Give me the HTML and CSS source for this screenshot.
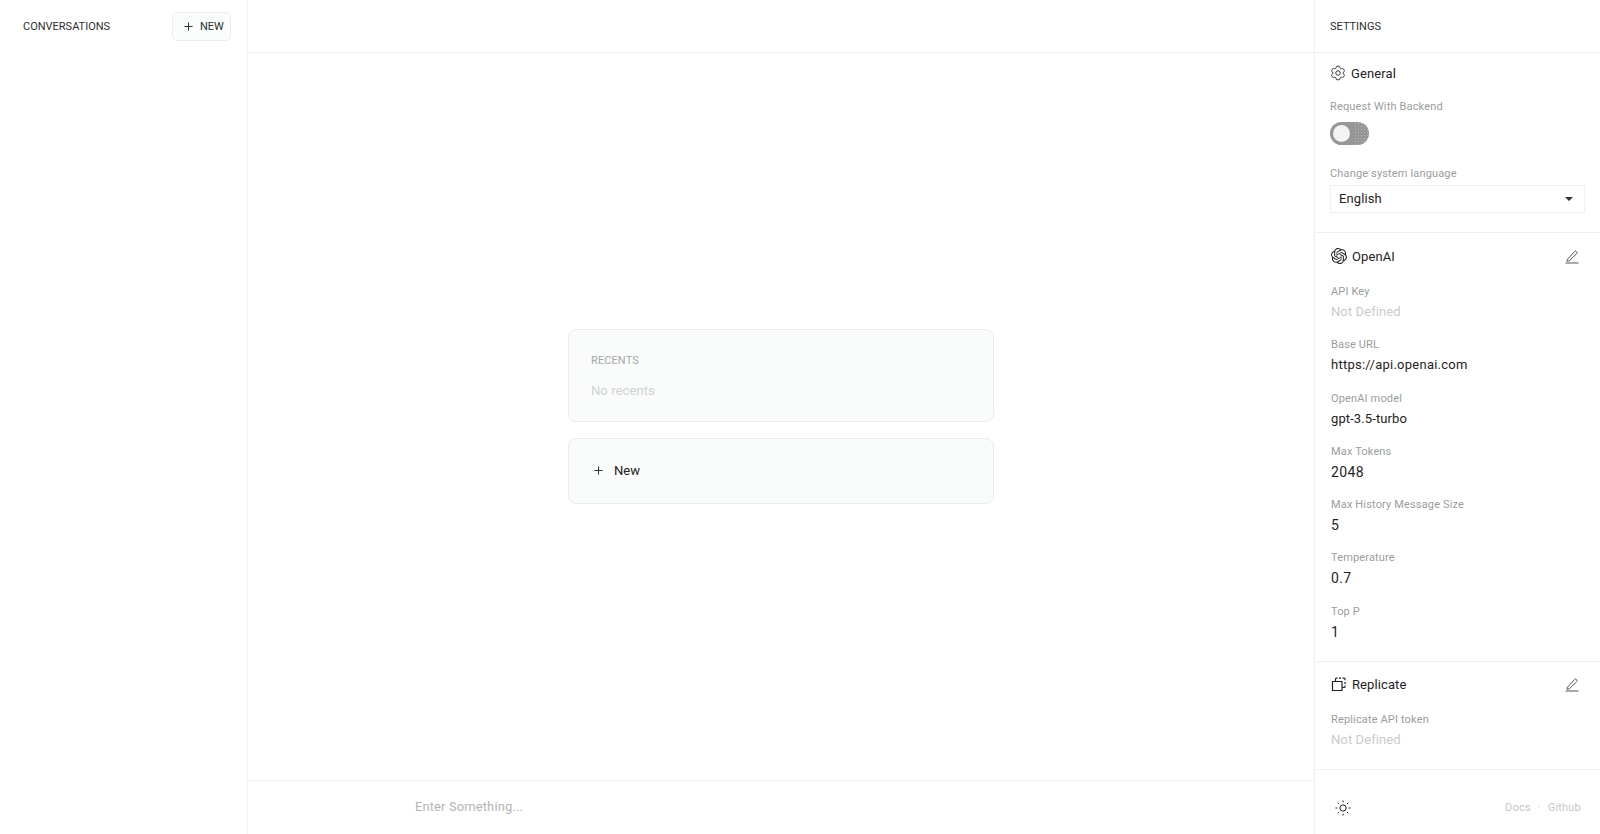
FILE: index.html
```html
<!DOCTYPE html>
<html lang="en">
<head>
    <meta charset="UTF-8">
    <meta name="viewport" content="width=device-width, initial-scale=1.0">
    <title>Chat</title>
    <link rel="stylesheet" href="styles.css">
</head>
<body>
    <div class="app">
        <aside class="sidebar">
            <div class="bar sidebar-bar">
                <span class="bar-title">CONVERSATIONS</span>
                <button class="btn-new">
                    <svg class="icon-plus" viewBox="0 0 24 24"><path d="M12 4.5v15m7.5-7.5h-15"/></svg>
                    NEW
                </button>
            </div>
        </aside>

        <main class="main">
            <div class="bar"></div>
            <div class="welcome">
                <div class="card recents">
                    <div class="card-title">RECENTS</div>
                    <div class="card-empty">No recents</div>
                </div>
                <div class="card new-card">
                    <svg class="icon-plus" viewBox="0 0 24 24"><path d="M12 4.5v15m7.5-7.5h-15"/></svg>
                    New
                </div>
            </div>
            <div class="prompt">Enter Something...</div>
        </main>

        <aside class="settings">
            <div class="bar settings-bar">
                <span class="bar-title">SETTINGS</span>
            </div>

            <section class="group general">
                <div class="group-head">
                    <h3>
                        <svg class="icon icon-gear" viewBox="0 0 24 24"><path d="M9.594 3.94c.09-.542.56-.94 1.11-.94h2.593c.55 0 1.02.398 1.11.94l.213 1.281c.063.374.313.686.645.87.074.04.147.083.22.127.324.196.72.257 1.075.124l1.217-.456a1.125 1.125 0 011.37.49l1.296 2.247a1.125 1.125 0 01-.26 1.431l-1.003.827c-.293.24-.438.613-.431.992a6.759 6.759 0 010 .255c-.007.378.138.75.43.99l1.005.828c.424.35.534.954.26 1.43l-1.298 2.247a1.125 1.125 0 01-1.369.491l-1.217-.456c-.355-.133-.75-.072-1.076.124a6.57 6.57 0 01-.22.128c-.331.183-.581.495-.644.869l-.213 1.28c-.09.543-.56.941-1.11.941h-2.594c-.55 0-1.02-.398-1.11-.94l-.213-1.281c-.062-.374-.312-.686-.644-.87a6.52 6.52 0 01-.22-.127c-.325-.196-.72-.257-1.076-.124l-1.217.456a1.125 1.125 0 01-1.369-.49l-1.297-2.247a1.125 1.125 0 01.26-1.431l1.004-.827c.292-.24.437-.613.43-.992a6.932 6.932 0 010-.255c.007-.378-.138-.75-.43-.99l-1.004-.828a1.125 1.125 0 01-.26-1.43l1.297-2.247a1.125 1.125 0 011.37-.491l1.216.456c.356.133.751.072 1.076-.124.072-.044.146-.087.22-.128.332-.183.582-.495.644-.869l.214-1.281z"/><path d="M15 12a3 3 0 11-6 0 3 3 0 016 0z"/></svg>
                        General
                    </h3>
                </div>
                <div class="label">Request With Backend</div>
                <div class="toggle"><span class="knob"></span></div>
                <div class="label lang-label">Change system language</div>
                <div class="select">
                    English
                    <span class="caret"></span>
                </div>
            </section>

            <section class="group openai">
                <div class="group-head">
                    <h3>
                        <svg class="icon icon-fill" viewBox="0 0 24 24"><path d="M22.2819 9.8211a5.9847 5.9847 0 0 0-.5157-4.9108 6.0462 6.0462 0 0 0-6.5098-2.9A6.0651 6.0651 0 0 0 4.9807 4.1818a5.9847 5.9847 0 0 0-3.9977 2.9 6.0462 6.0462 0 0 0 .7427 7.0966 5.98 5.98 0 0 0 .511 4.9107 6.051 6.051 0 0 0 6.5146 2.9001A5.9847 5.9847 0 0 0 13.2599 24a6.0557 6.0557 0 0 0 5.7718-4.2058 5.9894 5.9894 0 0 0 3.9977-2.9001 6.0557 6.0557 0 0 0-.7475-7.0729zm-9.022 12.6081a4.4755 4.4755 0 0 1-2.8764-1.0408l.1419-.0804 4.7783-2.7582a.7948.7948 0 0 0 .3927-.6813v-6.7369l2.02 1.1686a.071.071 0 0 1 .038.052v5.5826a4.504 4.504 0 0 1-4.4945 4.4944zm-9.6607-4.1254a4.4708 4.4708 0 0 1-.5346-3.0137l.142.0852 4.783 2.7582a.7712.7712 0 0 0 .7806 0l5.8428-3.3685v2.3324a.0804.0804 0 0 1-.0332.0615L9.74 19.9502a4.4992 4.4992 0 0 1-6.1408-1.6464zM2.3408 7.8956a4.485 4.485 0 0 1 2.3655-1.9728V11.6a.7664.7664 0 0 0 .3879.6765l5.8144 3.3543-2.0201 1.1685a.0757.0757 0 0 1-.071 0l-4.8303-2.7865A4.504 4.504 0 0 1 2.3408 7.872zm16.5963 3.8558L13.1038 8.364 15.1192 7.2a.0757.0757 0 0 1 .071 0l4.8303 2.7913a4.4944 4.4944 0 0 1-.6765 8.1042v-5.6772a.79.79 0 0 0-.407-.667zm2.0107-3.0231l-.142-.0852-4.7735-2.7818a.7759.7759 0 0 0-.7854 0L9.409 9.2297V6.8974a.0662.0662 0 0 1 .0284-.0615l4.8303-2.7866a4.4992 4.4992 0 0 1 6.6802 4.66zM8.3065 12.863l-2.02-1.1638a.0804.0804 0 0 1-.038-.0567V6.0742a4.4992 4.4992 0 0 1 7.3757-3.4537l-.142.0805L8.704 5.459a.7948.7948 0 0 0-.3927.6813zm1.0976-2.3654l2.602-1.4998 2.6069 1.4998v2.9994l-2.5974 1.4997-2.6067-1.4997Z"/></svg>
                        OpenAI
                    </h3>
                    <svg class="icon-edit" viewBox="0 0 16 16"><path d="M3.5 11.2 10.7 3.4a1.1 1.1 0 0 1 1.6 0l.5.5a1.1 1.1 0 0 1 0 1.6L5.5 12.7l-2.6.5z"/><path d="M1.5 15h13"/></svg>
                </div>
                <div class="field"><div class="label">API Key</div><div class="value empty">Not Defined</div></div>
                <div class="field"><div class="label">Base URL</div><div class="value url">https://api.openai.com</div></div>
                <div class="field"><div class="label">OpenAI model</div><div class="value">gpt-3.5-turbo</div></div>
                <div class="field"><div class="label">Max Tokens</div><div class="value num">2048</div></div>
                <div class="field"><div class="label">Max History Message Size</div><div class="value num">5</div></div>
                <div class="field"><div class="label">Temperature</div><div class="value num">0.7</div></div>
                <div class="field"><div class="label">Top P</div><div class="value num">1</div></div>
            </section>

            <section class="group replicate">
                <div class="group-head">
                    <h3>
                        <svg class="icon" viewBox="0 0 16 16"><path d="M1.5 5.5h9.5v9H1.5z"/><path d="M4.5 5.5V3.2c0-.6.4-1 1-1h1M8 2.2h2M11.5 2.2h1.5c.6 0 1 .4 1 1v1M14 6v2M14 9.5v1.2c0 .5-.3.8-.8.8H11"/></svg>
                        Replicate
                    </h3>
                    <svg class="icon-edit" viewBox="0 0 16 16"><path d="M3.5 11.2 10.7 3.4a1.1 1.1 0 0 1 1.6 0l.5.5a1.1 1.1 0 0 1 0 1.6L5.5 12.7l-2.6.5z"/><path d="M1.5 15h13"/></svg>
                </div>
                <div class="field"><div class="label">Replicate API token</div><div class="value empty">Not Defined</div></div>
            </section>

            <div class="settings-foot">
                <svg class="icon icon-sun" viewBox="0 0 24 24"><path d="M12 3v2.25m6.364.386l-1.591 1.591M21 12h-2.25m-.386 6.364l-1.591-1.591M12 18.75V21m-4.773-4.227l-1.591 1.591M5.25 12H3m4.227-4.773L5.636 5.636M15.75 12a3.75 3.75 0 11-7.5 0 3.75 3.75 0 017.5 0z"/></svg>
                <div class="foot-links">Docs <span class="dot">·</span> Github</div>
            </div>
        </aside>
    </div>
</body>
</html>
```

FILE: styles.css
```css
* {
    box-sizing: border-box;
}
body {
    margin: 0;
    font-family: Roboto, "Liberation Sans", sans-serif;
    font-size: 13px;
    letter-spacing: 0.1px;
    color: #1f2323;
    background: white;
    overflow: hidden;
}
.app {
    display: flex;
    height: 100vh;
}
.bar {
    display: flex;
    align-items: center;
    justify-content: space-between;
    height: 53px;
    flex-shrink: 0;
    border-bottom: 1px solid #eef0f0;
}
.bar-title {
    font-size: 11px;
    letter-spacing: 0;
    color: #2c3030;
}

/* left column */
.sidebar {
    width: 248px;
    flex-shrink: 0;
    border-right: 1px solid #eef0f0;
}
.sidebar-bar {
    border-bottom: none;
    padding: 0 16px 0 23px;
}
.btn-new {
    display: flex;
    align-items: center;
    gap: 5px;
    width: 59px;
    height: 29px;
    padding: 0 0 0 9px;
    font-family: inherit;
    font-size: 11px;
    color: #2c3030;
    background: #fbfcfc;
    border: 1px solid #ebeded;
    border-radius: 5px;
}
.icon-plus {
    width: 13px;
    height: 13px;
    fill: none;
    stroke: #2c3030;
    stroke-width: 1.8;
}

/* middle column */
.main {
    flex: 1;
    display: flex;
    flex-direction: column;
    min-width: 0;
}
.welcome {
    flex: 1;
    display: flex;
    flex-direction: column;
    align-items: center;
    justify-content: center;
    gap: 16px;
}
.card {
    width: 426px;
    background: #fafbfb;
    border: 1px solid #ebeded;
    border-radius: 8px;
}
.recents {
    height: 93px;
    padding: 23px 22px;
}
.card-title {
    font-size: 11px;
    line-height: 16px;
    color: #a6a9a9;
}
.card-empty {
    margin-top: 13px;
    line-height: 18px;
    color: #d0d2d2;
}
.new-card {
    display: flex;
    align-items: center;
    gap: 9px;
    height: 66px;
    padding: 0 23px 1px;
}
.prompt {
    height: 54px;
    padding: 16px 0 0 167px;
    line-height: 20px;
    color: #b4b6b6;
    border-top: 1px solid #eef0f0;
}

/* right column */
.settings {
    width: 286px;
    flex-shrink: 0;
    display: flex;
    flex-direction: column;
    border-left: 1px solid #eef0f0;
}
.settings-bar {
    padding: 1px 15px 0;
}
.group {
    padding: 0 15px 0 16px;
    border-bottom: 1px solid #eef0f0;
}
.group-head {
    display: flex;
    align-items: center;
    justify-content: space-between;
    height: 20px;
    padding-right: 5px;
}
.group h3 {
    display: flex;
    align-items: center;
    gap: 5px;
    margin: 0;
    font-size: 13px;
    font-weight: 400;
}
.icon {
    width: 16px;
    height: 16px;
    fill: none;
    stroke: #1f2323;
    stroke-width: 1.2;
}
.icon-gear {
    width: 18px;
    height: 18px;
    margin: 0 -1px;
}
.icon-fill {
    fill: #1f2323;
    stroke: none;
}
.icon-edit {
    width: 16px;
    height: 16px;
    fill: none;
    stroke: #555;
    stroke-width: 1;
}
.label {
    font-size: 11px;
    line-height: 16px;
    letter-spacing: 0.15px;
    color: #9a9d9d;
}
.value {
    margin-top: 2px;
    line-height: 20px;
    color: #1f2323;
}
.value.empty {
    color: #c9cbcb;
}
.value.url {
    letter-spacing: 0.25px;
}
.value.num {
    font-size: 14px;
    letter-spacing: 0.4px;
}
.field {
    margin-top: 15.3px;
}
.group-head + .field {
    margin-top: 18px;
}

.general {
    height: 180px;
    padding: 10px 15px;
}
.general .label {
    margin-top: 16px;
}
.general .lang-label {
    margin-top: 21px;
}
.toggle {
    width: 39px;
    height: 23px;
    margin-top: 7px;
    padding: 3px;
    border-radius: 12px;
    background-color: #969696;
    background-image: linear-gradient(90deg, #969696 60%, transparent 60%), radial-gradient(#b8b8b8 30%, transparent 35%);
    background-size: 100% 100%, 3px 3px;
}
.knob {
    display: block;
    width: 17px;
    height: 17px;
    border-radius: 50%;
    background: #f2f3f3;
}
.select {
    display: flex;
    align-items: center;
    justify-content: space-between;
    height: 28px;
    margin-top: 3px;
    padding: 0 11px 2px 8px;
    border: 1px solid #eef0f0;
}
.caret {
    margin-top: 2px;
    border-left: 4px solid transparent;
    border-right: 4px solid transparent;
    border-top: 4.5px solid #333;
}

.openai {
    height: 429px;
    padding-top: 13px;
}
.replicate {
    height: 108px;
    padding-top: 12px;
}
.settings-foot {
    flex: 1;
    display: flex;
    align-items: center;
    justify-content: space-between;
    padding: 19px 19px 8px 18px;
}
.icon-sun {
    width: 20px;
    height: 20px;
    stroke-width: 1.2;
}
.foot-links {
    font-size: 11px;
    letter-spacing: 0.2px;
    color: #c4c6c6;
}
.dot {
    margin: 0 4px;
}
```
